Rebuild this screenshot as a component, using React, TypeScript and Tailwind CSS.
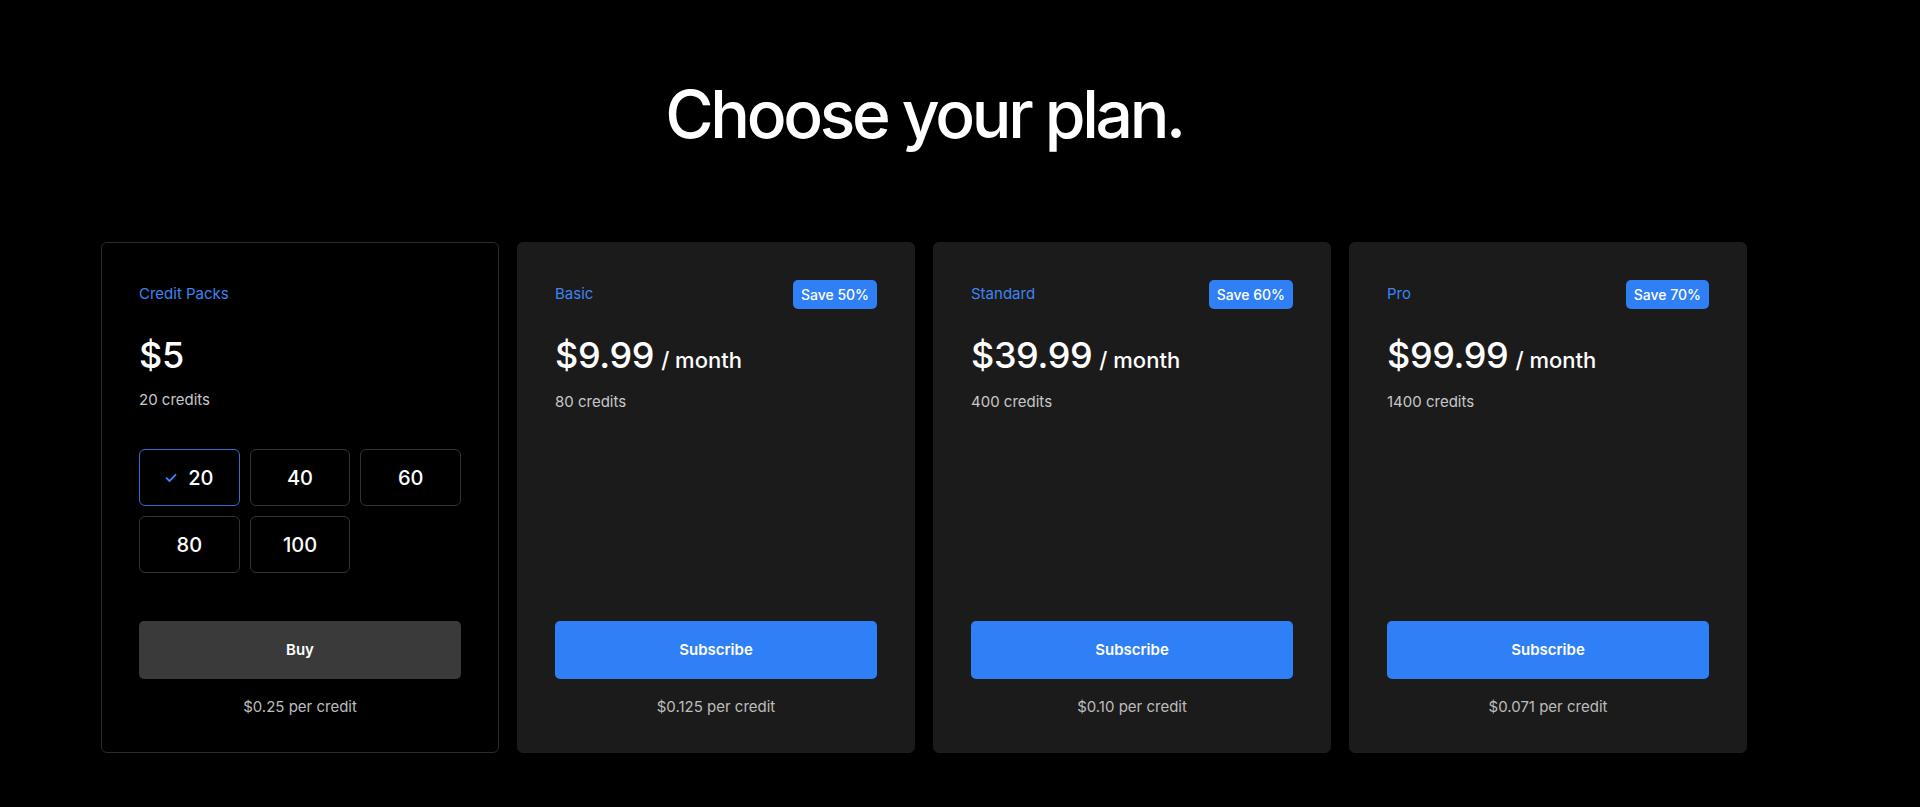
import React from "react";

const plans = [
  { name: "Basic", save: "Save 50%", price: "$9.99", credits: "80 credits", per: "$0.125 per credit" },
  { name: "Standard", save: "Save 60%", price: "$39.99", credits: "400 credits", per: "$0.10 per credit" },
  { name: "Pro", save: "Save 70%", price: "$99.99", credits: "1400 credits", per: "$0.071 per credit" },
];

function Check() {
  return (
    <svg width="12" height="10" viewBox="0 0 12 10" fill="none">
      <path d="M1.5 5.2 L4.5 8 L10.5 1.8" stroke="#3b82f6" strokeWidth="1.8" strokeLinecap="round" strokeLinejoin="round" />
    </svg>
  );
}

export default function App() {
  return (
    <div
      className="min-h-[807px] w-full bg-black text-white"
      style={{ fontFamily: "Inter, 'Noto Sans', sans-serif" }}
    >
      <div className="ml-[101px] w-[1646px] flex flex-col items-center pt-[81px]">
        <h1 className="text-[66px] leading-none font-medium tracking-[-0.05em] text-white">
          Choose your plan.
        </h1>
        <div className="mt-[95px] flex w-full gap-[18px]">
          {/* Credit packs */}
          <div className="w-[398px] h-[511px] rounded-[6px] border border-[#2a2a2a] bg-black flex flex-col px-[37px] pt-[37px] pb-[35px]">
            <div className="h-[29px] flex items-center">
              <span className="text-[15px] text-[#3d85f0]">Credit Packs</span>
            </div>
            <div className="mt-[26px] text-[36px] leading-[40px] font-medium tracking-[-0.01em]">$5</div>
            <div className="mt-[15px] text-[15px] leading-5 text-[#c8c8c8]">20 credits</div>
            <div className="mt-[39px] grid grid-cols-3 gap-[10px]">
              {["20", "40", "60", "80", "100"].map((v, i) => (
                <div
                  key={v}
                  className={
                    i === 0
                      ? "h-[57px] rounded-[6px] border border-[#2f6fd0] flex items-center justify-center gap-[11px] text-[20px] font-medium"
                      : "h-[57px] rounded-[6px] border border-[#333333] flex items-center justify-center text-[20px] font-medium"
                  }
                >
                  {i === 0 && <Check />}
                  <span>{v}</span>
                </div>
              ))}
            </div>
            <div className="mt-auto">
              <button className="h-[58px] w-full rounded-[5px] bg-[#3a3a3a] text-[15px] font-semibold text-white">
                Buy
              </button>
              <div className="mt-[18px] text-center text-[15px] leading-5 text-[#bdbdbd]">$0.25 per credit</div>
            </div>
          </div>

          {plans.map((p) => (
            <div
              key={p.name}
              className="w-[398px] h-[511px] rounded-[6px] border border-[#1b1b1b] bg-[#1b1b1b] flex flex-col px-[37px] pt-[37px] pb-[35px]"
            >
              <div className="h-[29px] flex items-center justify-between">
                <span className="text-[15px] text-[#3d85f0]">{p.name}</span>
                <span className="h-[29px] px-[8px] rounded-[5px] bg-[#2f80f7] text-[14px] font-medium text-white flex items-center">
                  {p.save}
                </span>
              </div>
              <div className="mt-[26px] flex items-baseline">
                <span className="text-[36px] leading-[40px] font-medium tracking-[-0.01em]">{p.price}</span>
                <span className="ml-[7px] text-[22px] font-medium">/ month</span>
              </div>
              <div className="mt-[15px] text-[15px] leading-5 text-[#c8c8c8]">{p.credits}</div>
              <div className="mt-auto">
                <button className="h-[58px] w-full rounded-[5px] bg-[#2f80f7] text-[15px] font-semibold text-white">
                  Subscribe
                </button>
                <div className="mt-[18px] text-center text-[15px] leading-5 text-[#bdbdbd]">{p.per}</div>
              </div>
            </div>
          ))}
        </div>
      </div>
    </div>
  );
}
